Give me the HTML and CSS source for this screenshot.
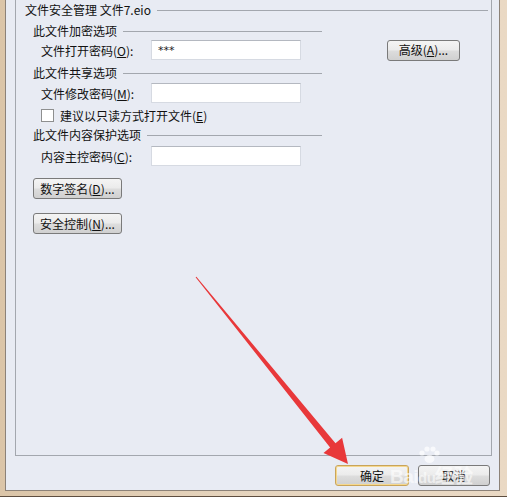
FILE: index.html
```html
<!DOCTYPE html>
<html lang="zh-CN">

<head>
    <meta charset="UTF-8">
    <title>文件安全管理</title>
    <link rel="stylesheet" href="styles.css">
</head>

<body>
    <div class="window">
        <div class="panel">
            <div class="group">
                <div class="head head-main">
                    <span>文件安全管理 文件7.eio</span>
                    <span class="rule"></span>
                </div>

                <!-- 加密选项 -->
                <div class="head head-sec sec1">
                    <span>此文件加密选项</span>
                    <span class="rule"></span>
                </div>
                <div class="row row-o">
                    <label class="field-label">文件打开密码(<u>O</u>):</label>
                    <input class="field" type="text" value="***">
                    <button class="button btn-adv">高级(<u>A</u>)...</button>
                </div>

                <!-- 共享选项 -->
                <div class="head head-sec sec2">
                    <span>此文件共享选项</span>
                    <span class="rule"></span>
                </div>
                <div class="row row-m">
                    <label class="field-label">文件修改密码(<u>M</u>):</label>
                    <input class="field" type="text">
                </div>
                <div class="check-row">
                    <span class="checkbox"></span>
                    <span>建议以只读方式打开文件(<u>E</u>)</span>
                </div>

                <!-- 内容保护选项 -->
                <div class="head head-sec sec3">
                    <span>此文件内容保护选项</span>
                    <span class="rule"></span>
                </div>
                <div class="row row-c">
                    <label class="field-label">内容主控密码(<u>C</u>):</label>
                    <input class="field" type="text">
                </div>

                <button class="button btn-wide btn-sign">数字签名(<u>D</u>)...</button>
                <button class="button btn-wide btn-ctrl">安全控制(<u>N</u>)...</button>
            </div>

            <div class="footer">
                <button class="button btn-ok">确定</button>
                <button class="button btn-cancel">取消</button>
            </div>
        </div>
    </div>

    <!-- watermark -->
    <div class="watermark">
        <svg class="paw" width="22" height="18" viewBox="0 0 22 18">
            <circle cx="4" cy="7" r="2.6" />
            <circle cx="9" cy="3" r="2.6" />
            <circle cx="15" cy="3" r="2.6" />
            <circle cx="19" cy="7" r="2.6" />
            <ellipse cx="11.5" cy="13" rx="5" ry="4" />
        </svg>
        <span class="wm-text">Bai<b>du</b>经验</span>
    </div>

    <!-- red arrow -->
    <svg class="arrow" width="507" height="503" viewBox="0 0 507 503">
        <polygon points="196.4,276.7 335.5,443.2 342.1,437.8 348,464 323.5,453 330.1,447.6 195.6,277.3" fill="#e8383a" />
    </svg>
</body>

</html>
```

FILE: styles.css
```css
body {
    margin: 0;
    background-color: #fff;
    font-family: "Noto Sans CJK SC", "DejaVu Sans", sans-serif;
    font-size: 12px;
    color: #111;
    width: 507px;
    height: 503px;
    overflow: hidden;
    position: relative;
}

.window {
    width: 507px;
    height: 497px;
    box-sizing: border-box;
    background: linear-gradient(90deg, #dbc5a8 0%, #e6d5bf 50%, #ead9c4 100%);
    padding: 0 7px 5px 5px;
    border-bottom: 1px solid #5e4e40;
}

.panel {
    height: 100%;
    box-sizing: border-box;
    background-color: #e8ebf3;
    border-left: 1px solid #8c8278;
    border-right: 1px solid #8c8278;
    border-bottom: 1px solid #8c8278;
    display: flex;
    flex-direction: column;
}

.group {
    margin: 0 7px 0 9px;
    height: 456px;
    box-sizing: border-box;
    border: 1px solid #a3a7ae;
    border-top: none;
    padding: 3px 3px 0 9px;
    display: flex;
    flex-direction: column;
    align-items: flex-start;
}

.head {
    display: flex;
    align-items: center;
    height: 14px;
    line-height: 14px;
    white-space: nowrap;
    align-self: stretch;
}

.rule {
    flex: 1;
    height: 1px;
    background-color: #a3a7ae;
    margin-left: 6px;
}

.head-sec {
    margin-left: 8px;
    width: 289px;
    align-self: flex-start;
}

.sec1 { margin-top: 7px; }
.sec2 { margin-top: 6px; }
.sec3 { margin-top: 6px; }

.row {
    display: flex;
    align-items: center;
    height: 20px;
    margin-left: 16px;
}

.row-o { margin-top: 2px; }
.row-m { margin-top: 3px; }
.row-c { margin-top: 4px; }

.field-label {
    width: 110px;
    white-space: nowrap;
}

.field {
    width: 150px;
    height: 20px;
    box-sizing: border-box;
    border: 1px solid #d6dae2;
    border-top-color: #b4b8c0;
    background: #fff;
    padding: 0 6px;
    margin: 0;
    font-family: "DejaVu Sans", sans-serif;
    font-size: 11px;
    color: #1a1a1a;
}

.check-row {
    display: flex;
    align-items: center;
    height: 14px;
    margin: 5px 0 0 16px;
    white-space: nowrap;
}

.checkbox {
    width: 11px;
    height: 11px;
    border: 1px solid #8e8f8f;
    background: #fff;
    margin-right: 6px;
}

.button {
    font-family: "Noto Sans CJK SC", "DejaVu Sans", sans-serif;
    font-size: 12px;
    color: #111;
    height: 21px;
    box-sizing: border-box;
    padding: 0;
    border: 1px solid #7a7a7a;
    border-radius: 3px;
    background: linear-gradient(#f4f4f4 0%, #ebebeb 48%, #dddddd 52%, #d0d0d0 100%);
    line-height: 18px;
    white-space: nowrap;
}

.btn-adv {
    width: 73px;
    margin-left: 86px;
}

.btn-wide {
    width: 89px;
    margin-left: 8px;
}

.btn-sign { margin-top: 12px; }
.btn-ctrl { margin-top: 14px; }

.footer {
    display: flex;
    justify-content: flex-end;
    gap: 9px;
    padding: 9px 9px 0 0;
}

.btn-ok {
    width: 74px;
    border-color: #c9a45a;
    box-shadow: inset 0 0 0 1px #f5d88f;
}

.btn-cancel {
    width: 72px;
}

.watermark {
    position: absolute;
    left: 390px;
    top: 446px;
    width: 100px;
    height: 44px;
    color: rgba(255, 255, 255, 0.6);
}

.paw {
    position: absolute;
    left: 28px;
    top: 0;
    fill: rgba(255, 255, 255, 0.7);
}

.wm-text {
    position: absolute;
    left: 0;
    top: 15px;
    font-family: "Liberation Sans", sans-serif;
    font-size: 19px;
    font-weight: bold;
    letter-spacing: -0.5px;
}

.wm-text b {
    font-size: 15px;
}

.arrow {
    position: absolute;
    left: 0;
    top: 0;
}
```
